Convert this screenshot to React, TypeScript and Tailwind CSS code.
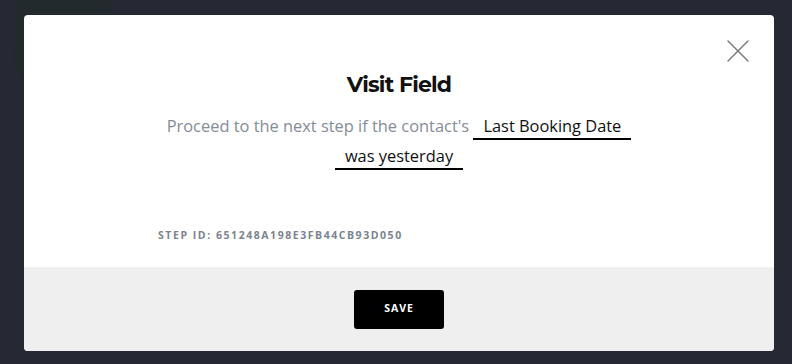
import { X } from "lucide-react";

export default function App() {
  return (
    <div className="relative h-[364px] w-[792px] overflow-hidden bg-[#262933]">
      {/* faint backdrop shape behind the modal */}
      <div className="absolute left-[14px] top-[-60px] h-[160px] w-[96px] rounded-full bg-[#222a2d]" />
      <div className="relative ml-[24px] mt-[15px] flex h-[336px] w-[750px] flex-col overflow-hidden rounded-[4px] bg-white">
        <button className="absolute right-[16px] top-[16px] text-[#7b7b7b]">
          <X size={40} strokeWidth={0.9} />
        </button>
        <div className="flex flex-1 flex-col items-center pt-[55px]">
          <h2 className="font-['Montserrat','Inter',sans-serif] text-[22px] font-bold leading-[30px] tracking-[-0.8px] text-[#111]">
            Visit Field
          </h2>
          <p className="mt-[11px] w-[500px] text-center font-['Open_Sans',sans-serif] text-[16.4px] leading-[30px] text-[#848c97]">
            Proceed to the next step if the contact's{" "}
            <span className="inline-block border-b-2 border-black px-[10px] leading-[25px] text-[#111]">
              Last Booking Date
            </span>{" "}
            <span className="inline-block border-b-2 border-black px-[10px] leading-[25px] text-[#111]">
              was yesterday
            </span>
          </p>
          <div className="mt-[57px] w-full pl-[134px] font-['Open_Sans',sans-serif] text-[10.5px] font-bold tracking-[1.55px] text-[#7b838e]">
            STEP ID: 651248A198E3FB44CB93D050
          </div>
        </div>
        <div className="flex h-[84px] items-center justify-center bg-[#efefef]">
          <button className="h-[39px] w-[90px] rounded-[3px] bg-black font-['Open_Sans',sans-serif] text-[10.5px] font-bold tracking-[1px] text-white">
            SAVE
          </button>
        </div>
      </div>
    </div>
  );
}
